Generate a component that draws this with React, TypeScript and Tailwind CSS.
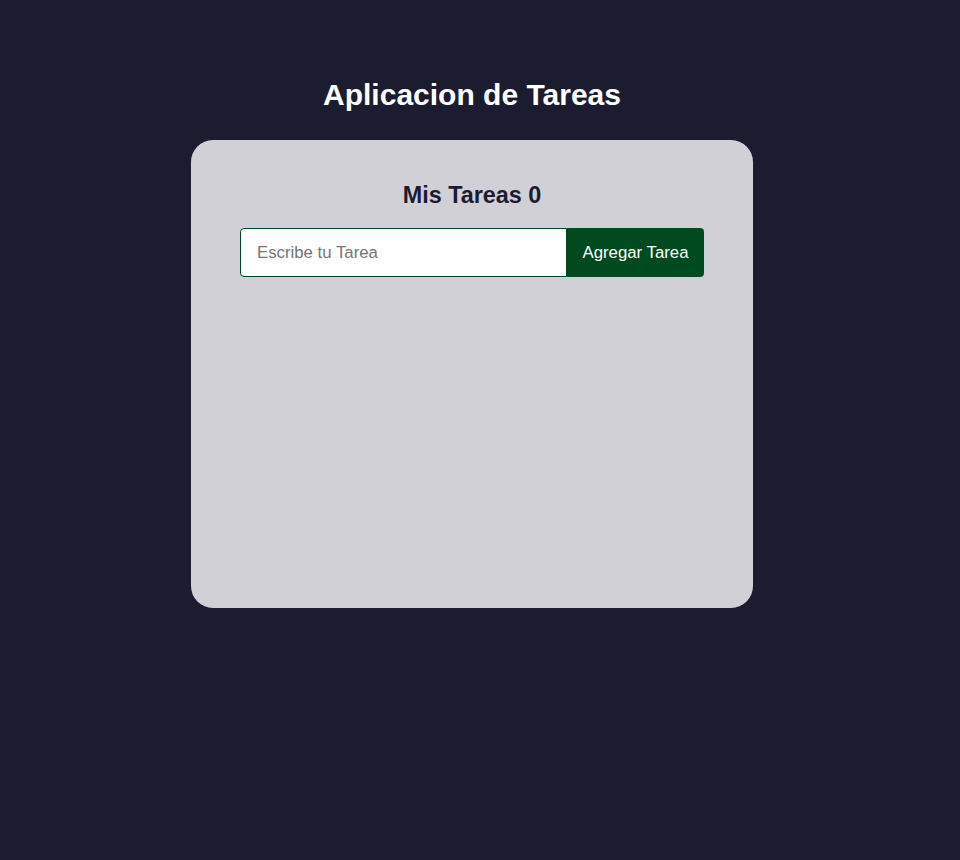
import React from "react";

export default function App() {
  return (
    <div
      className="min-h-[860px] w-full bg-[#1c1c31] flex flex-col items-center pr-[16px]"
      style={{ fontFamily: '"Liberation Sans", Arial, sans-serif' }}
    >
      <h1 className="mt-[78px] text-[30px] leading-[34px] font-bold text-white">
        Aplicacion de Tareas
      </h1>
      <div className="mt-[28px] w-[562px] h-[468px] rounded-[22px] bg-[#d1d0d6] px-[49px] pt-[41px] flex flex-col items-center">
        <h2 className="text-[23.4px] leading-[28px] font-bold text-[#1c1c31]">
          Mis Tareas 0
        </h2>
        <div className="mt-[19px] flex w-full h-[49px]">
          <input
            className="flex-1 min-w-0 bg-white border border-[#00461e] rounded-l-[4px] px-4 text-[16.8px] text-[#222] placeholder:text-[#757575] outline-none"
            placeholder="Escribe tu Tarea"
            style={{ fontFamily: '"Liberation Sans", Arial, sans-serif' }}
          />
          <button
            className="w-[137px] bg-[#004a1f] text-white text-[16.8px] rounded-r-[4px]"
            style={{ fontFamily: '"Liberation Sans", Arial, sans-serif' }}
          >
            Agregar Tarea
          </button>
        </div>
      </div>
    </div>
  );
}
